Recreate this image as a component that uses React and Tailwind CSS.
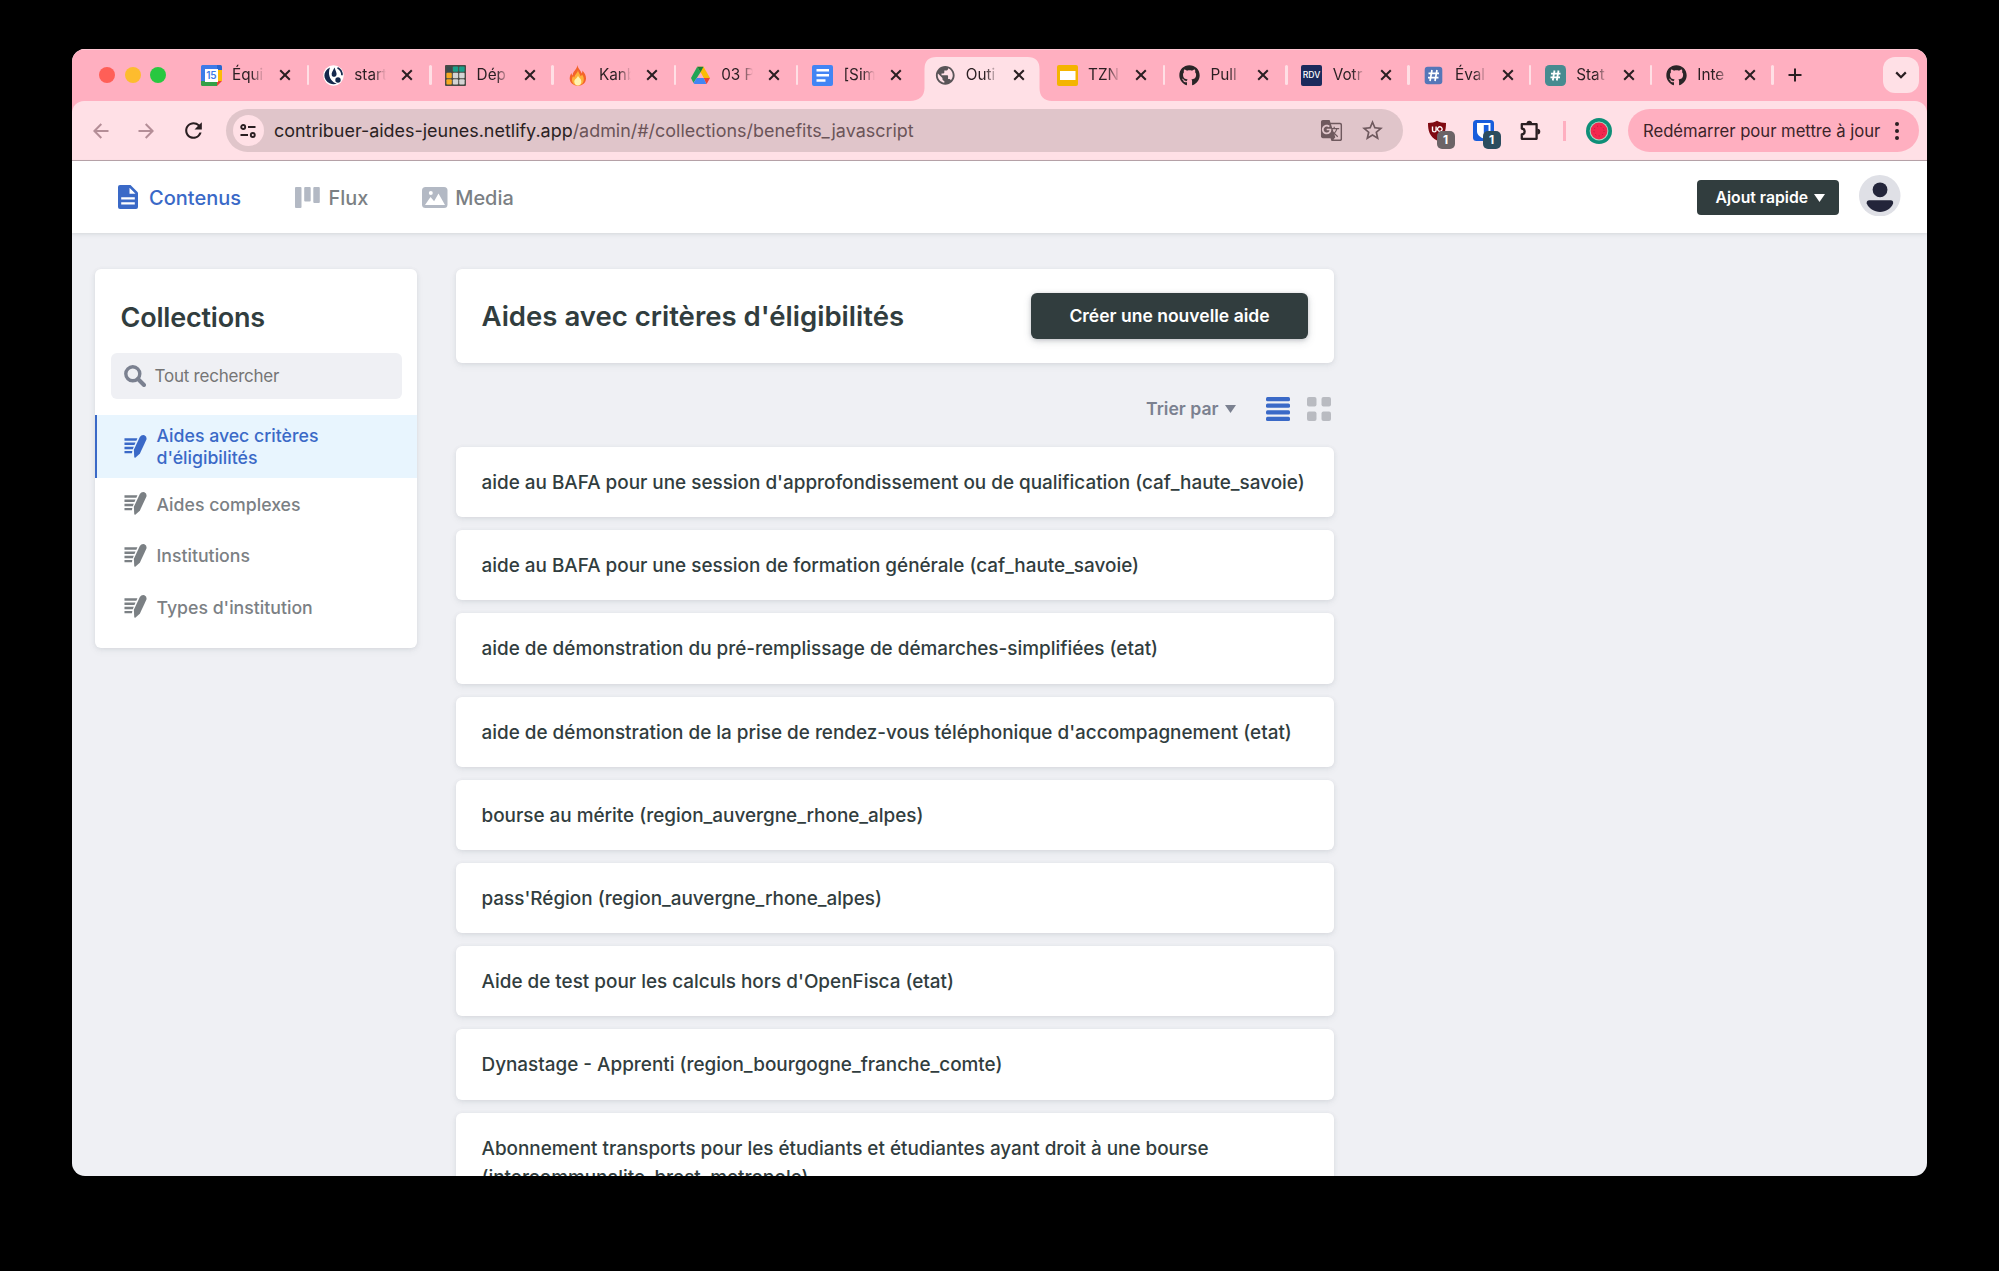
import React from "react";
import { FaGithub } from "react-icons/fa";
import { MdPublic, MdGTranslate, MdStarOutline, MdRefresh } from "react-icons/md";

function CalendarIcon() {
  return (
    <svg viewBox="0 0 21 21" className="size-[21px]">
      <path d="M0 1.5Q0 0 1.5 0H16v5H5v11H0z" fill="#3d7be8" />
      <path d="M16 0h3.500Q21 0 21 1.500V5h-5z" fill="#2867cf" />
      <path d="M16 5h5v11h-5z" fill="#fbbc04" />
      <path d="M0 16h16v5H1.500Q0 21 0 19.500z" fill="#34a047" />
      <path d="M16 16h5l-5 5z" fill="#ea4335" />
      <path d="M4 4H17V17H4z" fill="#fff" />
      <text x="10.400" y="14.300" textAnchor="middle" fontSize="10" fontWeight="600" fontFamily="Inter, sans-serif" fill="#3d7be8">15</text>
    </svg>
  );
}

function StartupIcon() {
  return (
    <svg viewBox="0 0 21 21" className="size-[21px]">
      <circle cx="10.500" cy="10.500" r="10.200" fill="#fff" />
      <path d="M7 2.500C-0.500 6 -0.500 15 7 18.500c2.500 1 5 .9 6.800 0C8 17 4 10 7 2.500z" fill="#14294d" />
      <path d="M11.500 2.500c-1.500 3-3.500 5.500-2.700 8 .8 2 4 1.800 4.700-.5.600-2-1-4.500-2-7.500z" fill="#14294d" />
      <path d="M14.500 2.800c3 1.500 4.500 4 4.500 7.500" stroke="#14294d" strokeWidth="1.700" fill="none" />
      <circle cx="15" cy="15" r="2.700" fill="#14294d" />
    </svg>
  );
}

function GridIcon() {
  const cells = [
    ["#3a4a4c", "#19a08a", "#19a08a"],
    ["#f6a821", "#d4d4d4", "#d4d4d4"],
    ["#f6a821", "#d4d4d4", "#d4d4d4"],
  ];
  return (
    <svg viewBox="0 0 21 21" className="size-[21px]">
      <rect width="21" height="21" rx="1" fill="#4a4a45" />
      {cells.map((row, y) =>
        row.map((c, x) => <rect key={x + "-" + y} x={1.4 + x * 6.4} y={1.4 + y * 6.4} width="5.400" height="5.400" rx="1" fill={c} />)
      )}
    </svg>
  );
}

function FireIcon() {
  return (
    <svg viewBox="0 0 21 21" className="size-[21px]">
      <path d="M10.500 0c.3 3.500 3.500 5.500 4.200 8.500.6-.8.8-2 .6-3 2.500 2.500 3.700 5 3.700 8 0 4.500-3.500 7.200-8 7.200s-8.300-2.700-8.300-7.200c0-2.200.8-4 1.800-5.500 0 1.200.4 2 1.200 2.500C5.500 6.500 10 4.500 10.500 0z" fill="#f4632a" />
      <path d="M11 5c.2 2.500 2 4 2.600 6.200.7-.4 1.200-1 1.400-1.700 1.300 1.500 1.800 3 1.800 4.700 0 3.800-2.600 6.300-5.900 6.300S5 18 5 14.700c0-1.600.5-2.800 1.200-3.700.2.700.6 1.200 1.200 1.500C7.500 9.500 10.500 8.500 11 5z" fill="#fdb13a" />
      <path d="M11 10.500c.5 2.200 3.300 3 3.300 6 0 2.500-1.600 4-3.400 4s-3.600-1.500-3.600-3.800C7.300 14 10.500 13.500 11 10.500z" fill="#fff3b0" />
    </svg>
  );
}

function DriveIcon() {
  return (
    <svg viewBox="0 0 21 21" className="size-[21px]">
      <path d="M7.500 1.800h6L20 13h-6.300z" fill="#fbbc04" />
      <path d="M13.700 13H20l-2.800 5-.9 1z" fill="#ea4335" />
      <path d="M10.500 7.400l3 5.600h-6z" fill="#ffb0c0" />
      <path d="M7.200 1.800L1 13l2.500 5.100L10.500 7.200z" fill="#23a455" />
      <path d="M7.200 1.800h6.300l-3 5.400z" fill="#188038" />
      <path d="M6.700 13h7l2.600 6H5q-1 0-1.500-.9z" fill="#4285f4" />
    </svg>
  );
}

function DocsIcon() {
  return (
    <svg viewBox="0 0 21 21" className="size-[21px]">
      <rect width="21" height="21" rx="2" fill="#4285f4" />
      <path d="M4.500 5.200h12.500M4.500 10.300h12.500M4.500 15.500h9" stroke="#fff" strokeWidth="2.400" />
    </svg>
  );
}

function SlidesIcon() {
  return (
    <svg viewBox="0 0 21 21" className="size-[21px]">
      <rect width="21" height="21" rx="2" fill="#f4b400" />
      <rect x="3" y="6" width="15.500" height="9" fill="#fff" />
    </svg>
  );
}

function RdvIcon() {
  return (
    <svg viewBox="0 0 21 21" className="size-[21px]">
      <rect width="21" height="21" rx="2" fill="#1b2a5c" />
      <text x="10.500" y="13.400" textAnchor="middle" fontSize="8.600" fontWeight="500" fontFamily="Inter, sans-serif" fill="#fff">RDV</text>
    </svg>
  );
}

function HashBlueIcon() {
  return (
    <svg viewBox="0 0 21 21" className="size-[21px]">
      <rect x="1.700" y="1.700" width="17.600" height="17.600" rx="3" fill="#5576b8" />
      <path d="M9 5L7 16M14 5l-2 11M5.500 8.300h10.500M5 12.600h10.500" stroke="#fff" strokeWidth="1.700" />
    </svg>
  );
}

function HashTealIcon() {
  return (
    <svg viewBox="0 0 21 21" className="size-[21px]">
      <rect width="21" height="21" rx="4.500" fill="#478b90" />
      <path d="M9.500 5.500l-1.700 10M13.500 5.500l-1.700 10M6 8.700h9.500M5.500 12.300h9.500" stroke="#fff" strokeWidth="1.800" />
    </svg>
  );
}

const Github = () => <FaGithub className="size-[21px] text-[#2a2527]" />;
const Globe = () => <MdPublic className="size-[22.500px] shrink-0 text-[#5a5558]" />;

const tabs = [
  { title: "Équi", icon: CalendarIcon },
  { title: "start", icon: StartupIcon },
  { title: "Dép", icon: GridIcon },
  { title: "Kanb", icon: FireIcon },
  { title: "03 P", icon: DriveIcon },
  { title: "[Sim", icon: DocsIcon },
  { title: "Outi", icon: Globe, active: true },
  { title: "TZN", icon: SlidesIcon },
  { title: "Pull", icon: Github },
  { title: "Votr", icon: RdvIcon },
  { title: "Éval", icon: HashBlueIcon, narrow: true },
  { title: "Stat", icon: HashTealIcon, narrow: true },
  { title: "Inte", icon: Github, narrow: true },
];

function Tab({ title, icon: Icon, active, narrow }) {
  return (
    <div className={(narrow ? "w-[121.200px]" : "w-[122.300px]") + " relative flex h-full shrink-0 items-center pl-[13.500px]"}>
      {active && (
        <svg viewBox="0 0 142 44" className="absolute top-2 -left-[11px] h-[44px] w-[142px]">
          <path d="M0 44C9 44 14.500 39 14.500 31V12Q14.500 0 26.500 0H117.500Q129.500 0 129.500 12V31C129.500 39 134 44 142 44z" fill="#ffe0e6" />
        </svg>
      )}
      <span className="relative flex w-[21px] shrink-0 justify-center"><Icon /></span>
      <span className="relative ml-[10.500px] w-[32px] overflow-hidden text-[15.300px] leading-6 whitespace-nowrap text-[#2a1f22] [mask-image:linear-gradient(to_right,black_60%,transparent)]">{title}</span>
      <svg viewBox="0 0 12 12" className="relative ml-[15px] size-3">
        <path d="M1.200 1.200l9.600 9.600M10.800 1.200l-9.600 9.600" stroke="#2a1f22" strokeWidth="2" />
      </svg>
      {!active && title !== "[Sim" && <span className="ml-auto h-5 w-[2.500px] rounded-full bg-[#ffdfe5]" />}
    </div>
  );
}

function TabStrip() {
  return (
    <div className="flex h-[52px] shrink-0 items-center bg-[#ffafc0] pr-2 pl-[27px] shadow-[inset_0_1px_0_#ffc6d2]">
      <div className="flex w-[88px] gap-[9.700px]">
        <span className="size-4 rounded-full bg-[#ff5f57]" />
        <span className="size-4 rounded-full bg-[#fdbc2e]" />
        <span className="size-4 rounded-full bg-[#28c840]" />
      </div>
      <div className="flex h-full">
        {tabs.map((t) => <Tab key={t.title + t.icon.name} {...t} />)}
      </div>
      <svg viewBox="0 0 14 14" className="ml-[14px] size-[14px]">
        <path d="M7 .5v13M.5 7h13" stroke="#2a1f22" strokeWidth="2" />
      </svg>
      <div className="ml-auto flex size-9 items-center justify-center rounded-xl bg-[#ffe0e6]">
        <svg viewBox="0 0 12 8" className="h-2 w-3">
          <path d="M1.200 1.400L6 6.200l4.800-4.800" stroke="#2a1f22" strokeWidth="2.200" fill="none" />
        </svg>
      </div>
    </div>
  );
}

function Arrow({ flip }) {
  return (
    <svg viewBox="0 0 16 16" className={flip ? "size-4 rotate-180" : "size-4"}>
      <path d="M8.300 1L1.400 8l6.900 7M1.600 8H15.500" stroke="#b48e97" strokeWidth="2" fill="none" />
    </svg>
  );
}

function Badge({ className }) {
  return (
    <span className={className + " absolute top-[13px] left-[10px] flex size-[18px] items-center justify-center rounded-[5px] text-[12px] leading-none font-bold text-white"}>1</span>
  );
}

function Toolbar() {
  return (
    <div className="h-[60px] shrink-0 bg-[#ffafc0]">
      <div className="flex h-full items-center rounded-t-[12px] border-b border-[#b9a5ab] bg-[#ffe0e6] pr-2 pl-[20.500px]">
        <Arrow />
        <span className="ml-[29.500px] flex"><Arrow flip /></span>
        <MdRefresh className="ml-[26.500px] size-[25px] text-[#2a1f22]" />
        <div className="ml-[20.500px] flex h-[43.500px] w-[1177px] items-center rounded-full bg-[#e0c5ca] pr-[18.500px] pl-[6.500px]">
          <span className="flex size-[31px] items-center justify-center rounded-full bg-[#ffe0e6]">
            <svg viewBox="0 0 16 14" className="h-[14px] w-4" fill="none" stroke="#2a1f22" strokeWidth="1.900">
              <circle cx="3.200" cy="3" r="2" />
              <path d="M8 3h7.500M.5 11H8" />
              <circle cx="12.800" cy="11" r="2" />
            </svg>
          </span>
          <span className="ml-[10.500px] text-[17.950px] leading-6 whitespace-nowrap text-[#6b5458]">
            <span className="text-[#2a1f22]">contribuer-aides-jeunes.netlify.app</span>/admin/#/collections/benefits_javascript
          </span>
          <MdGTranslate className="ml-auto size-[23px] text-[#6f595e]" />
          <MdStarOutline className="ml-[17px] size-[25px] text-[#6f595e]" />
        </div>
        <span className="relative ml-[23.500px] flex h-[25px] w-[20px] items-center">
          <svg viewBox="0 0 20 22" className="h-[22px] w-5">
            <path d="M10 .8c2.500 1.500 5.500 2.200 9 2.200 0 8-1.500 13.500-9 17.500C2.500 16.500 1 11 1 3c3.500 0 6.500-.7 9-2.200z" fill="#800a12" />
            <path d="M5.500 6.500v3.800q0 1.600 1.800 1.600t1.800-1.600V6.500M12.800 6.800a2.300 2.300 0 1 0 .1 0z" stroke="#fff" strokeWidth="1.400" fill="none" />
          </svg>
          <Badge className="bg-[#6c6467]" />
        </span>
        <span className="relative ml-[26px] flex h-[25px] w-[21px] items-center">
          <svg viewBox="0 0 21 21" className="size-[21px]">
            <rect width="21" height="21" rx="3.500" fill="#175ddc" />
            <path d="M4 3h13.500v8c0 4-3 6-6.700 7.800C7 17 4 15 4 11z" fill="#fff" />
            <path d="M10.800 5h4.700v6.200c0 2.400-2.200 3.800-4.700 5.200z" fill="#175ddc" />
          </svg>
          <Badge className="bg-[#2c4d5f]" />
        </span>
        <svg viewBox="0 0 23 23" className="ml-[25.500px] size-[23px]">
          <path d="M2.800 5.200h14.800v14.600H2.800v-4.300c3.800-.6 3.800-5.400 0-6z" stroke="#2a1f22" strokeWidth="2.300" strokeLinejoin="round" fill="none" />
          <path d="M7.500 4.600a2.800 2.800 0 0 1 5.600 0zM18.400 9.700a2.900 2.900 0 0 1 0 5.800z" fill="#2a1f22" />
        </svg>
        <span className="ml-[21px] h-5 w-[2.500px] bg-[#ffafc0]" />
        <svg viewBox="0 0 26 26" className="ml-[20.500px] size-[26px]">
          <circle cx="13" cy="13" r="13" fill="#0f8f78" />
          <circle cx="13" cy="13" r="9.400" fill="#a9d9c4" />
          <circle cx="13" cy="13" r="8.400" fill="#f4274f" />
          <circle cx="13" cy="13" r="5" fill="none" stroke="#b01c3c" strokeWidth="1" strokeDasharray="1 2.500" />
        </svg>
        <div className="ml-auto flex h-[43.500px] w-[291px] items-center rounded-full bg-[#ffafc0] pl-[15px]">
          <span className="text-[16.650px] leading-6 whitespace-nowrap text-[#3a2429]">Redémarrer pour mettre à jour</span>
          <svg viewBox="0 0 4 18" className="ml-[15px] h-[18px] w-1" fill="#2a1f22">
            <circle cx="2" cy="2" r="2" /><circle cx="2" cy="9" r="2" /><circle cx="2" cy="16" r="2" />
          </svg>
        </div>
      </div>
    </div>
  );
}

function Header() {
  return (
    <header className="relative flex h-[72px] shrink-0 items-center bg-white pr-[26.500px] pl-[46px] font-medium shadow-[0_2px_6px_rgba(68,74,87,.05),0_1px_3px_rgba(68,74,87,.1)]">
      <svg viewBox="0 0 20 24" className="h-6 w-5">
        <path d="M2 0h10.500L20 7.500V22q0 2-2 2H2q-2 0-2-2V2Q0 0 2 0z" fill="#3a69c7" />
        <path d="M11.500 2.800v6h6zM3.200 12.200h13.600v2.200H3.200zM3.200 17.300h13.600v2.200H3.200z" fill="#fff" />
      </svg>
      <span className="ml-[11px] pt-[1.500px] text-[20px] leading-6 text-[#3a69c7]">Contenus</span>
      <svg viewBox="0 0 25 21" className="ml-[54.500px] h-[21px] w-[25px]" fill="#b3b9c4">
        <rect width="6.500" height="21" rx="1" /><rect x="9.200" width="6.500" height="14.500" rx="1" /><rect x="18.300" width="6.500" height="16" rx="1" />
      </svg>
      <span className="ml-2 pt-[1.500px] text-[19.900px] leading-6 text-[#7b8084]">Flux</span>
      <svg viewBox="0 0 26 21" className="ml-[54px] h-[21px] w-[26px]">
        <rect width="25.500" height="21" rx="3.500" fill="#b3b9c4" />
        <path d="M3 18l5.500-8 3.600 4.200L16.500 6.500 23 18z" fill="#fff" />
        <circle cx="8.800" cy="6" r="2" fill="#fff" />
      </svg>
      <span className="ml-[7px] pt-[1.500px] text-[19.900px] leading-6 text-[#7b8084]">Media</span>
      <button className="ml-auto flex h-[35px] w-[142px] items-center rounded-[4px] bg-[#313d3e] pt-px pl-[18.500px] text-[15.750px] font-semibold whitespace-nowrap text-white">
        Ajout rapide
        <svg viewBox="0 0 11 8" className="ml-[6px] h-2 w-[11px]"><path d="M0 0h11L5.500 8z" fill="#fff" /></svg>
      </button>
      <svg viewBox="0 0 42 42" className="relative -top-[1.500px] ml-5 size-[41.500px]">
        <circle cx="21" cy="21" r="21" fill="#dfe0e6" />
        <circle cx="21.300" cy="15" r="7.500" fill="#23253a" />
        <path d="M10.500 25.500h21.500q3 0 2.500 3.200C33 34 27 37.500 21.300 37.500S9.500 34 7.800 28.700q-.3-3.200 2.700-3.200z" fill="#23253a" />
      </svg>
    </header>
  );
}

function WriteIcon() {
  return (
    <svg viewBox="0 0 23 24" className="size-[23px] shrink-0" fill="currentColor">
      <path d="M0 3.400h13.500l-1.100 2.600H0zM0 7.800h11.500l-1.100 2.600H0zM0 12.200h9.700l-1 2.600H0zM0 16.600h8.200l-.4 2.400H0z" />
      <path d="M16 2.200Q17.800-.5 20.800.3q3 1.600 2 4.700L16 19.500l-4.700 4.300q-1 .3-1.100-.8L9.800 15.500z" />
    </svg>
  );
}

const collections = ["Aides complexes", "Institutions", "Types d'institution"];
const card = "rounded-[6px] bg-white shadow-[0_3px_8px_rgba(68,74,87,.05),0_1px_4px_rgba(68,74,87,.1)]";

function Sidebar() {
  return (
    <aside className={card + " h-[379px] w-[322px] shrink-0 pt-7"}>
      <h2 className="pt-px pl-[25.500px] text-[27px] leading-10 font-semibold tracking-[-0.200px] text-[#313d3e]">Collections</h2>
      <div className="mx-auto mt-[15px] flex h-[46px] w-[291px] items-center rounded-[6px] bg-[#eff0f4] pl-[13px]">
        <svg viewBox="0 0 22 22" className="size-[22px]" fill="none" stroke="#7b8190">
          <circle cx="8.800" cy="8.800" r="7" strokeWidth="3.400" />
          <path d="M14 14l6 6" strokeWidth="4" strokeLinecap="round" />
        </svg>
        <span className="ml-[9px] pt-px text-[17px] tracking-[-0.230px] text-[#757575]">Tout rechercher</span>
      </div>
      <nav className="mt-4 text-[17.700px] leading-[21.300px] font-medium">
        <a className="flex h-[63px] items-center gap-[9.500px] border-l-[2.500px] border-[#3a69c7] bg-[#e8f5fe] pl-[27px] text-[#3a69c7]">
          <WriteIcon />
          <span>Aides avec critères<br />d'éligibilités</span>
        </a>
        {collections.map((c) => (
          <a key={c} className="flex h-[51.600px] items-center gap-[9.500px] pl-[29px] text-[#7b8084]">
            <WriteIcon />
            <span className="pt-px">{c}</span>
          </a>
        ))}
      </nav>
    </aside>
  );
}

const entries = [
  "aide au BAFA pour une session d'approfondissement ou de qualification (caf_haute_savoie)",
  "aide au BAFA pour une session de formation générale (caf_haute_savoie)",
  "aide de démonstration du pré-remplissage de démarches-simplifiées (etat)",
  "aide de démonstration de la prise de rendez-vous téléphonique d'accompagnement (etat)",
  "bourse au mérite (region_auvergne_rhone_alpes)",
  "pass'Région (region_auvergne_rhone_alpes)",
  "Aide de test pour les calculs hors d'OpenFisca (etat)",
  "Dynastage - Apprenti (region_bourgogne_franche_comte)",
  "Abonnement transports pour les étudiants et étudiantes ayant droit à une bourse (intercommunalite_brest_metropole)",
];

function Main() {
  return (
    <main className="w-[878px] shrink-0">
      <div className={card + " flex h-[94px] items-center justify-between pr-[25.500px] pl-[26px]"}>
        <h1 className="pt-[2px] text-[27.550px] font-semibold text-[#313d3e]">Aides avec critères d'éligibilités</h1>
        <button className="flex h-[46.500px] w-[277px] items-center justify-center rounded-[6px] bg-[#313d3e] pt-px text-[17.550px] font-semibold text-white shadow-[0_3px_8px_rgba(68,74,87,.15),0_1px_4px_rgba(68,74,87,.25)]">Créer une nouvelle aide</button>
      </div>
      <div className="flex h-[84px] items-center justify-end pt-2 pr-[3px]">
        <span className="pt-px text-[17.600px] font-semibold text-[#7b8190]">Trier par</span>
        <svg viewBox="0 0 11 8" className="ml-[6px] h-2 w-[11px]"><path d="M0 0h11L5.500 8z" fill="#7b8190" /></svg>
        <svg viewBox="0 0 24 24" className="ml-[30px] size-6" fill="#3a69c7">
          <rect width="24" height="4.200" rx="1.500" /><rect y="6.600" width="24" height="4.200" rx="1.500" /><rect y="13.200" width="24" height="4.200" rx="1.500" /><rect y="19.800" width="24" height="4.200" rx="1.500" />
        </svg>
        <svg viewBox="0 0 24 24" className="ml-[17px] size-6" fill="#b9bbc1">
          <rect width="9.500" height="9.500" rx="2" /><rect x="14.500" width="9.500" height="9.500" rx="2" /><rect y="14.500" width="9.500" height="9.500" rx="2" /><rect x="14.500" y="14.500" width="9.500" height="9.500" rx="2" />
        </svg>
      </div>
      <ul className="flex flex-col gap-[12.900px]">
        {entries.map((e) => (
          <li key={e} className={card + " px-[26px] pt-[21px] pb-[20.300px] text-[18.900px] leading-[29px] font-medium text-[#313d3e]"}>{e}</li>
        ))}
      </ul>
    </main>
  );
}

export default function App() {
  return (
    <div className="h-[1271px] w-[1999px] overflow-hidden bg-black pt-[49px] pl-[72px] font-['Inter',sans-serif]">
      <div className="flex h-[1127px] w-[1855px] flex-col overflow-hidden rounded-[13px] bg-[#eff0f4]">
        <TabStrip />
        <Toolbar />
        <Header />
        <div className="flex min-h-0 flex-1 gap-[38.500px] overflow-hidden pt-9 pl-[23px]">
          <Sidebar />
          <Main />
        </div>
      </div>
    </div>
  );
}
